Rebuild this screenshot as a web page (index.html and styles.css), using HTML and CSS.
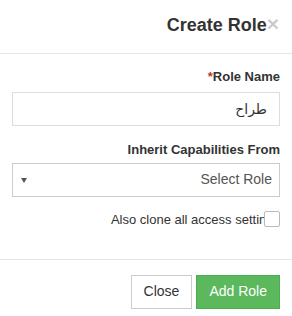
FILE: index.html
```html
<!DOCTYPE html>
<html lang="en">
<head>
    <meta charset="UTF-8">
    <meta name="viewport" content="width=device-width, initial-scale=1.0">
    <title>Create Role</title>
    <link rel="stylesheet" href="styles.css">
</head>
<body>
    <div class="modal-content">
        <header class="modal-header">
            <h4 class="modal-title">Create Role</h4>
            <button class="close" type="button">&times;</button>
        </header>
        <div class="modal-body">
            <div class="form-group">
                <label class="control-label"><span class="required">*</span>Role Name</label>
                <input class="form-control" type="text" dir="rtl" value="طراح">
            </div>
            <div class="form-group">
                <label class="control-label">Inherit Capabilities From</label>
                <div class="select-box">
                    <span class="select-arrow"></span>
                    <span class="select-text">Select Role</span>
                </div>
            </div>
            <div class="checkbox">
                <label class="checkbox-label">Also clone all access settings</label>
                <span class="check-input"></span>
            </div>
        </div>
        <footer class="modal-footer">
            <button class="btn btn-default" type="button">Close</button>
            <button class="btn btn-success" type="button">Add Role</button>
        </footer>
    </div>
</body>
</html>
```

FILE: styles.css
```css
* {
    margin: 0;
    padding: 0;
    box-sizing: border-box;
}

body {
    font-family: "Liberation Sans", "DejaVu Sans", sans-serif;
    font-size: 14px;
    line-height: 1.42857;
    color: #333;
    background-color: #fff;
}

.modal-header {
    display: flex;
    justify-content: flex-end;
    align-items: flex-start;
    height: 54px;
    padding: 15px 13px 0 12px;
    border-bottom: 1px solid #e5e5e5;
}

.modal-title {
    font-size: 18px;
    font-weight: bold;
    line-height: 20px;
    color: #333;
}

.close {
    font-family: "Liberation Sans", sans-serif;
    font-size: 21px;
    font-weight: bold;
    line-height: 1;
    color: #000;
    opacity: 0.2;
    background: transparent;
    border: none;
    margin-top: -2px;
}

.modal-body {
    padding: 14px 12px 0 12px;
    height: 205px;
}

.form-group {
    display: flex;
    flex-direction: column;
    margin-bottom: 15px;
}

.control-label {
    text-align: right;
    font-size: 13px;
    font-weight: bold;
    margin-bottom: 5px;
}

.required {
    color: #c0392b;
}

.form-control {
    width: 100%;
    height: 34px;
    padding: 6px 12px;
    font-family: "Liberation Sans", "DejaVu Sans", sans-serif;
    font-size: 14px;
    color: #333;
    border: 1px solid #ddd;
    background: #fff;
    outline: none;
}

.select-box {
    display: flex;
    justify-content: space-between;
    align-items: center;
    height: 34px;
    margin-top: -1px;
    padding: 0 7px 0 8px;
    border: 1px solid #ccc;
    color: #555;
}

.select-arrow {
    width: 0;
    height: 0;
    margin-top: 1px;
    border-left: 3px solid transparent;
    border-right: 3px solid transparent;
    border-top: 5px solid #555;
}

.select-text {
    font-size: 14px;
}

.checkbox {
    position: relative;
    display: flex;
    justify-content: flex-end;
    margin-top: -2px;
}

.checkbox-label {
    font-size: 13px;
    color: #333;
    line-height: 20px;
}

.check-input {
    position: absolute;
    right: 0;
    top: 1px;
    width: 16px;
    height: 16px;
    background: #fff;
    border: 1px solid #bbb;
    border-radius: 2px;
}

.modal-footer {
    display: flex;
    justify-content: flex-end;
    gap: 4px;
    padding: 15px 12px;
    border-top: 1px solid #e5e5e5;
}

.btn {
    height: 34px;
    padding: 6px 12px;
    font-family: "Liberation Sans", sans-serif;
    font-size: 14px;
    line-height: 1.42857;
    border: 1px solid transparent;
    border-radius: 0;
    cursor: pointer;
}

.btn-default {
    color: #333;
    background-color: #fff;
    border-color: #ccc;
}

.btn-success {
    color: #fff;
    background-color: #5cb85c;
    border-color: #4cae4c;
}
```
